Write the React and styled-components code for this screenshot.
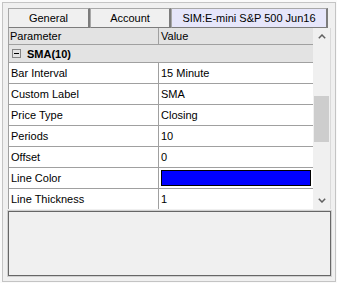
import React from "react";
import styled, { createGlobalStyle } from "styled-components";

const GlobalStyle = createGlobalStyle`
  html, body { margin: 0; padding: 0; background: #fafafa; }
  body { font-family: "Liberation Sans", Arial, sans-serif; font-size: 11px; color: #000; }
  * { box-sizing: border-box; }
`;

const Window = styled.div`
  width: 337px;
  height: 283px;
  padding: 2px 1px 1px 2px;
`;

const Frame = styled.div`
  height: 100%;
  border: 1px solid #c4c4c4;
  background: #f0f0f0;
  padding: 5px 4px 5px 5px;
  display: flex;
  flex-direction: column;
`;

const TabRow = styled.div`
  display: flex;
  height: 20px;
  width: 320px;
`;

const Tab = styled.div`
  width: ${(p) => p.$w}px;
  height: 20px;
  background: ${(p) => (p.$active ? "#e6e6fa" : "#f0f0f0")};
  border: 1px solid #a8a8a8;
  border-right: 2px solid #7c7c7c;
  border-bottom: 1px solid #7c7c7c;
  display: flex;
  align-items: center;
  justify-content: center;
  line-height: 18px;
  white-space: nowrap;
`;

const Grid = styled.div`
  height: 181px;
  display: flex;
  border-left: 1px solid #a0a0a0;
  border-right: 1px solid #dadada;
  overflow: hidden;
`;

const Table = styled.div`
  flex: 1;
  display: flex;
  flex-direction: column;
  background: #fff;
  overflow: hidden;
`;

const HeaderRow = styled.div`
  display: flex;
  height: 17px;
  flex: none;
  background: #e3e3e3;
  border-bottom: 1px solid #a0a0a0;
`;

const HeaderCell = styled.div`
  width: ${(p) => (p.$first ? "150px" : "auto")};
  flex: ${(p) => (p.$first ? "none" : "1")};
  border-right: ${(p) => (p.$first ? "1px solid #a0a0a0" : "none")};
  padding-left: ${(p) => (p.$first ? "1px" : "2px")};
  line-height: 16px;
`;

const CategoryRow = styled.div`
  display: flex;
  align-items: center;
  height: 18px;
  flex: none;
  background: #e3e3e3;
  border-bottom: 1px solid #a0a0a0;
  padding-left: 3px;
  font-weight: bold;
`;

const Toggle = styled.span`
  width: 9px;
  height: 9px;
  border: 1px solid #848484;
  position: relative;
  margin-right: 6px;
  flex: none;
  &::after {
    content: "";
    position: absolute;
    left: 1px;
    right: 1px;
    top: 3px;
    height: 1px;
    background: #000;
  }
`;

const Row = styled.div`
  display: flex;
  height: 21px;
  flex: none;
  border-bottom: 1px solid #a0a0a0;
`;

const NameCell = styled.div`
  width: 150px;
  flex: none;
  border-right: 1px solid #a0a0a0;
  padding-left: 2px;
  line-height: 20px;
  white-space: nowrap;
`;

const ValueCell = styled.div`
  flex: 1;
  padding-left: 2px;
  line-height: 20px;
  white-space: nowrap;
`;

const Swatch = styled.div`
  margin: 2px 2px 0 0;
  height: 16px;
  border: 1px solid #000;
  background: ${(p) => p.$color};
`;

const Scrollbar = styled.div`
  width: 17px;
  flex: none;
  background: #f0f0f0;
  display: flex;
  flex-direction: column;
  align-items: center;
`;

const Arrow = styled.div`
  height: 17px;
  width: 17px;
  flex: none;
  display: flex;
  align-items: center;
  justify-content: center;
`;

const Track = styled.div`
  flex: 1;
  width: 100%;
  padding: 51px 1px 0 1px;
`;

const Thumb = styled.div`
  height: 46px;
  background: #cdcdcd;
`;

const Description = styled.div`
  margin-top: 2px;
  flex: 1;
  border: 1px solid #666;
  box-shadow: 0 0 0 1px #d0d0d0;
  background: #f0f0f0;
`;

const Chevron = ({ up }) => (
  <svg width="8" height="5" viewBox="0 0 8 5">
    <path
      d={up ? "M0.8 4.2 L4 1 L7.2 4.2" : "M0.8 0.8 L4 4 L7.2 0.8"}
      fill="none"
      stroke="#606060"
      strokeWidth="1.5"
    />
  </svg>
);

const rows = [
  ["Bar Interval", "15 Minute"],
  ["Custom Label", "SMA"],
  ["Price Type", "Closing"],
  ["Periods", "10"],
  ["Offset", "0"],
  ["Line Color", null],
  ["Line Thickness", "1"],
];

export default function App() {
  return (
    <>
      <GlobalStyle />
      <Window>
        <Frame>
          <TabRow>
            <Tab $w={82}>General</Tab>
            <Tab $w={81}>Account</Tab>
            <Tab $w={157} $active>SIM:E-mini S&amp;P 500 Jun16</Tab>
          </TabRow>
          <Grid>
            <Table>
              <HeaderRow>
                <HeaderCell $first>Parameter</HeaderCell>
                <HeaderCell>Value</HeaderCell>
              </HeaderRow>
              <CategoryRow>
                <Toggle />
                SMA(10)
              </CategoryRow>
              {rows.map(([name, value]) => (
                <Row key={name}>
                  <NameCell>{name}</NameCell>
                  <ValueCell>
                    {value === null ? <Swatch $color="#0000ff" /> : value}
                  </ValueCell>
                </Row>
              ))}
            </Table>
            <Scrollbar>
              <Arrow>
                <Chevron up />
              </Arrow>
              <Track>
                <Thumb />
              </Track>
              <Arrow>
                <Chevron />
              </Arrow>
            </Scrollbar>
          </Grid>
          <Description />
        </Frame>
      </Window>
    </>
  );
}
